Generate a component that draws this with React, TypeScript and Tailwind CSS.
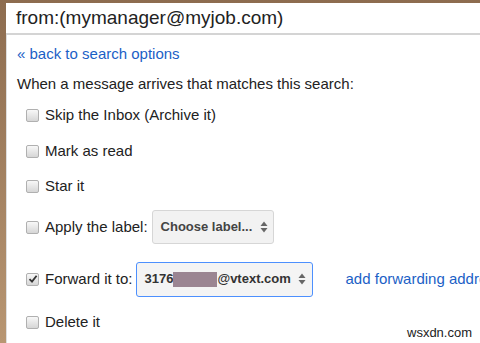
import React from 'react';

function Checkbox({ checked = false }: { checked?: boolean }) {
  return (
    <span className="flex h-[13px] w-[13px] shrink-0 items-center justify-center rounded-[2px] border border-[#b0b0b0] bg-gradient-to-b from-[#f8f8f8] to-[#d6d6d6]">
      {checked && (
        <svg width="10" height="10" viewBox="0 0 10 10">
          <path d="M1.5 5.2 L4 7.6 L8.6 1.8" fill="none" stroke="#333" strokeWidth="1.8" />
        </svg>
      )}
    </span>
  );
}

function UpDown() {
  return (
    <svg width="8" height="12" viewBox="0 0 8 12" className="shrink-0">
      <path d="M4 0.5 L7.5 5 H0.5 Z" fill="#666" />
      <path d="M4 11.5 L7.5 7 H0.5 Z" fill="#666" />
    </svg>
  );
}

function Row({ h, checked, children }: { h: string; checked?: boolean; children: React.ReactNode }) {
  return (
    <div className={`flex items-center whitespace-nowrap pl-[9px] ${h}`}>
      <Checkbox checked={checked} />
      <div className="ml-[6px] flex shrink-0 items-center">{children}</div>
    </div>
  );
}

export default function App() {
  return (
    <div
      className="relative flex h-[343px] w-[480px] flex-col overflow-hidden bg-gradient-to-b from-[#8d6c4f] to-[#b89672] pl-[6px] pt-[3px] text-[#222]"
      style={{ fontFamily: '"Liberation Sans", Arial, sans-serif' }}
    >
      <div className="flex min-h-0 flex-1 flex-col bg-white">
        <div className="flex h-[32px] shrink-0 items-center whitespace-nowrap border-b-2 border-[#d4d4d4] pl-[10px] text-[19px]">
          from:(mymanager@myjob.com)
        </div>
        <div className="flex min-h-0 flex-1 flex-col border-l border-[#dedede] pl-[10px] pt-[9px] text-[15px]">
          <a className="h-[20px] leading-[20px] text-[#1b5fc6]">« back to search options</a>
          <div className="mt-[10px] h-[20px] whitespace-nowrap leading-[20px]">When a message arrives that matches this search:</div>
          <div className="mt-[3px] flex flex-col">
            <Row h="h-[36px]">Skip the Inbox (Archive it)</Row>
            <Row h="h-[36px]">Mark as read</Row>
            <Row h="h-[34px]">Star it</Row>
            <Row h="h-[48px]">
              <span>Apply the label:</span>
              <div className="ml-[4px] flex h-[34px] w-[122px] shrink-0 items-center justify-between rounded-[3px] border border-[#d6d6d6] bg-[#f2f2f2] pl-[8px] pr-[5px] text-[13px] font-bold text-[#444]">
                <span>Choose label...</span>
                <UpDown />
              </div>
            </Row>
            <Row h="h-[56px]" checked>
              <span>Forward it to:</span>
              <div className="ml-[3px] flex h-[35px] w-[177px] shrink-0 items-center justify-between rounded-[3px] border border-[#4d90fe] bg-[#f4f4f4] pl-[8px] pr-[6px] text-[13px] font-bold text-[#333]">
                <span className="flex items-center">
                  3176
                  <span className="inline-block h-[15px] w-[44px] bg-[#9b8592]" />
                  @vtext.com
                </span>
                <UpDown />
              </div>
              <a className="ml-[33px] shrink-0 text-[#1b5fc6]">add forwarding address</a>
            </Row>
            <Row h="h-[30px]">Delete it</Row>
          </div>
        </div>
      </div>
      <div className="absolute left-[406px] top-[325px] bg-white px-[1px] text-[13px] leading-[15px] text-[#222]">
        wsxdn.com
      </div>
    </div>
  );
}
